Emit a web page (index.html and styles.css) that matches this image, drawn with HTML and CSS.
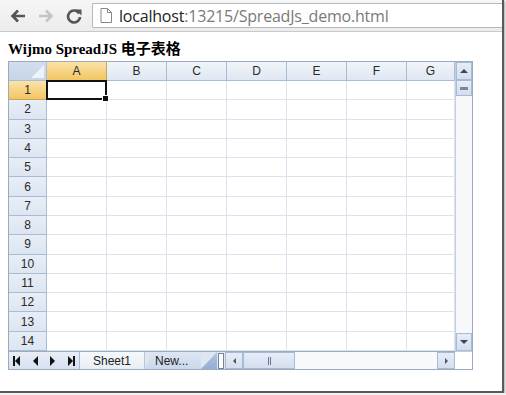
FILE: index.html
```html
<!DOCTYPE html>
<html lang="zh">
<head>
  <meta charset="UTF-8" />
  <title>SpreadJs demo</title>
  <link rel="stylesheet" href="styles.css">
</head>
<body>
  <div class="window">
    <div class="toolbar">
      <svg class="nav-btn" width="18" height="18" viewBox="0 0 18 18"><path d="M16 9H4M9 3.5L3.5 9 9 14.5" fill="none" stroke="#555" stroke-width="2.6"/></svg>
      <svg class="nav-btn" width="18" height="18" viewBox="0 0 18 18"><path d="M2 9h12M9 3.5L14.5 9 9 14.5" fill="none" stroke="#c4c4c4" stroke-width="2.6"/></svg>
      <svg class="nav-btn" width="18" height="18" viewBox="0 0 18 18"><path d="M14.2 6.5A6 6 0 1 0 15 10" fill="none" stroke="#555" stroke-width="2.6"/><path d="M10.5 2.5h6v6z" fill="#555"/></svg>
      <div class="address">
        <svg width="12" height="15" viewBox="0 0 12 15"><path d="M1 .5h6.5l4 4v10H1z M7.5 .5v4h4" fill="#fff" stroke="#888"/></svg>
        <span class="host">localhost</span><span class="path">:13215/SpreadJs_demo.html</span>
      </div>
    </div>

    <div class="page">
      <h1>Wijmo SpreadJS 电子表格</h1>
      <div class="sheet">
        <div class="cells" id="cells"></div>
        <div class="vscroll">
          <div class="sbtn"><span class="tri up"></span></div>
          <div class="vthumb"><span class="grip-h"></span></div>
          <div class="vtrack"></div>
          <div class="sbtn"><span class="tri down"></span></div>
        </div>
        <div class="tabbar">
          <div class="tabnav">
            <span class="tri left bar-l"></span>
            <span class="tri left"></span>
            <span class="tri right"></span>
            <span class="tri right bar-r"></span>
          </div>
          <div class="tab active">Sheet1</div>
          <div class="tab newtab">New...</div>
          <div class="wedge"></div>
          <div class="splitter"><span></span></div>
          <div class="hscroll">
            <div class="sbtn h"><span class="tri left small"></span></div>
            <div class="hthumb"><span class="grip-v"></span></div>
            <div class="htrack"></div>
            <div class="sbtn h"><span class="tri right small"></span></div>
          </div>
        </div>
        <div class="corner"></div>
      </div>
    </div>
  </div>

<script>
  const cols = ['A', 'B', 'C', 'D', 'E', 'F', 'G'];
  const cells = document.getElementById('cells');
  let html = '<div class="hd corner-hd"></div>';
  cols.forEach((c, i) => {
    html += `<div class="hd colhd${i === 0 ? ' sel' : ''}">${c}</div>`;
  });
  for (let r = 1; r <= 14; r++) {
    html += `<div class="hd rowhd${r === 1 ? ' sel' : ''}">${r}</div>`;
    cols.forEach((c, i) => {
      html += `<div class="cell${r === 1 && i === 0 ? ' active' : ''}"></div>`;
    });
  }
  cells.innerHTML = html;
</script>
</body>
</html>
```

FILE: styles.css
```css
body { margin: 0; background: #f4f4f4; font-family: "Liberation Sans", Arial, sans-serif; }
.window { width: 502px; height: 391px; background: #fff; border-right: 2px solid #5a5a5a; border-bottom: 2px solid #5a5a5a; box-shadow: 1px 1px 2px rgba(0,0,0,0.3); overflow: hidden; }

.toolbar { height: 32px; box-sizing: border-box; border-bottom: 1px solid #c9c9c9; background: linear-gradient(#f6f6f6, #ececec); display: flex; align-items: center; padding-left: 9px; }
.nav-btn { margin-right: 10px; }
.address { margin-left: -1px; height: 25px; flex: 1; box-sizing: border-box; border: 1px solid #b9b9b9; border-right: none; border-radius: 2px 0 0 2px; background: #fff; display: flex; align-items: center; padding-left: 7px; font-family: "Open Sans", sans-serif; font-size: 16px; letter-spacing: -0.2px; }
.address svg { margin-right: 7px; }
.host { color: #222; }
.path { color: #7a7a7a; }

.page { padding: 8px 0 0 8px; }
h1 { margin: 0 0 2px; font: bold 15px "Liberation Serif", "Noto Sans CJK SC", serif; color: #000; line-height: 19px; }

.sheet { width: 465px; height: 309px; box-sizing: border-box; border: 1px solid #9aabc0; display: grid; grid-template-columns: 1fr 17px; grid-template-rows: 1fr 18px; }

.cells { display: grid; grid-template-columns: 38px repeat(6, 60px) 1fr; grid-template-rows: 19px repeat(14, 1fr); overflow: hidden; }
.hd { box-sizing: border-box; border-right: 1px solid #a8bcd3; border-bottom: 1px solid #a8bcd3; background: linear-gradient(#f1f5fb, #dfe7f2); color: #2a2a2a; font-size: 12px; display: flex; align-items: center; justify-content: center; }
.colhd:last-child { justify-content: flex-end; padding-right: 12px; }
.rowhd { background: linear-gradient(#e8eef7, #dce5f1); }
.hd.sel { background: linear-gradient(#fbe3a8, #f2c561); border-color: #c9a55a; }
.corner-hd { background: linear-gradient(#d2deec, #c6d5e7); position: relative; }
.corner-hd::after { content: ""; position: absolute; right: 2px; bottom: 2px; border-left: 13px solid transparent; border-bottom: 13px solid #eef3f9; }
.cell { box-sizing: border-box; border-right: 1px solid #dbe3ee; border-bottom: 1px solid #dbe3ee; background: #fff; }
.cell.active { border: 2px solid #111; margin: -1px 0 0 -1px; position: relative; }
.cell.active::after { content: ""; position: absolute; right: -4px; bottom: -4px; width: 5px; height: 5px; background: #111; border: 1px solid #fff; }

.vscroll { background: #f7f8fa; border-left: 1px solid #c3cfdd; display: flex; flex-direction: column; }
.sbtn { height: 18px; box-sizing: border-box; border: 1px solid #a7bbd4; background: linear-gradient(#e6edf7, #d3def0); display: flex; align-items: center; justify-content: center; }
.vthumb { height: 16px; box-sizing: border-box; border: 1px solid #a7bbd4; background: linear-gradient(#e6edf7, #d3def0); display: flex; align-items: center; justify-content: center; }
.grip-h { width: 8px; height: 3px; background: #7d8796; }
.vtrack { flex: 1; }

.tri { width: 0; height: 0; display: inline-block; }
.tri.up { border-left: 4px solid transparent; border-right: 4px solid transparent; border-bottom: 4px solid #3b4656; }
.tri.down { border-left: 4px solid transparent; border-right: 4px solid transparent; border-top: 4px solid #3b4656; }
.tri.left { border-top: 5px solid transparent; border-bottom: 5px solid transparent; border-right: 5px solid #111; }
.tri.right { border-top: 5px solid transparent; border-bottom: 5px solid transparent; border-left: 5px solid #111; }
.tri.small { border-top-width: 3px; border-bottom-width: 3px; border-left-color: #555; border-right-color: #555; }
.tri.small.left { border-right-width: 3px; }
.tri.small.right { border-left-width: 3px; }
.bar-l, .bar-r { position: relative; }
.bar-l { margin-left: 2px; }
.bar-l::before, .bar-r::before { content: ""; position: absolute; top: -5px; width: 2px; height: 10px; background: #111; }
.bar-l::before { left: -2px; }
.bar-r::before { left: 0; }

.tabbar { display: flex; background: #dde6f2; border-top: 1px solid #9aabc0; }
.tabnav { width: 71px; box-sizing: border-box; border-right: 1px solid #a7bbd4; background: linear-gradient(#e8eef7, #d6e1f0); display: flex; align-items: center; justify-content: space-between; padding: 0 6px 0 4px; }
.tab { font-size: 12px; color: #222; display: flex; align-items: center; }
.tab.active { width: 64px; background: linear-gradient(#f5f8fc, #e9eef6); justify-content: center; border-right: 1px solid #b8c7da; }
.tab.newtab { width: 56px; padding-left: 10px; box-sizing: border-box; background: linear-gradient(#dde6f3, #c9d8ec); clip-path: polygon(8px 0, 100% 0, 100% 100%, 0 100%); }
.wedge { width: 16px; background: linear-gradient(#b1c5e1, #94aed4); clip-path: polygon(100% 0, 100% 100%, 0 100%); }
.splitter { width: 8px; background: #dfe7f2; display: flex; align-items: center; justify-content: center; }
.splitter span { width: 6px; height: 16px; box-sizing: border-box; border: 1px solid #6f84a2; background: #fff; }
.hscroll { flex: 1; display: flex; background: #f8f9fb; }
.sbtn.h { width: 18px; height: auto; }
.hthumb { width: 52px; box-sizing: border-box; border: 1px solid #a7bbd4; background: linear-gradient(#e6edf7, #d3def0); display: flex; align-items: center; justify-content: center; }
.grip-v { width: 3px; height: 8px; border-left: 1px solid #6c7686; border-right: 1px solid #6c7686; box-sizing: border-box; }
.htrack { flex: 1; }
.corner { background: #fff; border-top: 1px solid #c3cfdd; }
```
